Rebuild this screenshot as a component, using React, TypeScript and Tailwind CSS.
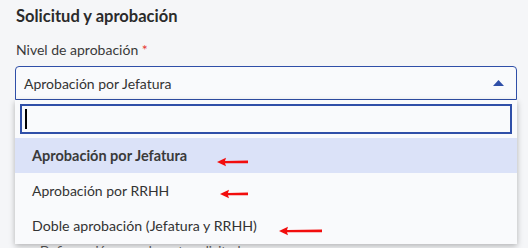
import React from "react";

function RedArrow({ width }: { width: number }) {
  return (
    <svg width={width} height={10} viewBox={`0 0 ${width} 10`} className="block">
      <path d={`M0 5 L9 0.8 L8 4 L${width} 3.6 L${width} 6.2 L8 6.2 L9 9.2 Z`} fill="#f20d0d" />
    </svg>
  );
}

export default function App() {
  return (
    <div className="relative w-[528px] h-[248px] overflow-hidden bg-[#f5f6f8] text-[#333333] font-['Lato','Open_Sans',sans-serif]">
      <div className="px-4 pt-[6px]">
        <h2 className="text-[16.5px] font-bold leading-[20px] text-[#2b2b2b]">Solicitud y aprobación</h2>
        <div className="mt-[15px] text-[14px] leading-[18px] text-[#3a3a3a]">
          Nivel de aprobación <span className="text-[#e53935]">*</span>
        </div>
        <div className="mt-[7px] w-[502px] h-[34px] ml-[-1px] flex items-center justify-between rounded-t-[4px] border border-[#2f4fa8] bg-[#f9fafc] pl-[8px] pr-[12px]">
          <span className="text-[14px] text-[#333]">Aprobación por Jefatura</span>
          <svg width="11" height="6" viewBox="0 0 11 6">
            <path d="M0 6 L5.5 0 L11 6 Z" fill="#2f4fa8" />
          </svg>
        </div>
        <div className="mt-[143px] pl-[24px] text-[13px] leading-[16px] text-[#555]">Defina quién aprueba esta solicitud</div>
      </div>

      <div className="absolute left-[15px] top-[100px] w-[502px] h-[144px] bg-[#f9fafc] shadow-[0_2px_6px_rgba(0,0,0,0.28)] flex flex-col">
        <div className="mx-[5px] mt-[4px] h-[30px] border-2 border-[#2f4fa8] bg-[#f9fafc] flex items-center pl-[3px]">
          <div className="w-[1.5px] h-[20px] bg-black" />
        </div>
        <div className="mt-[4px] h-[35px] bg-[#dbe2f8] flex items-center pl-[17px]">
          <span className="text-[14.5px] font-bold text-[#3a3a3a]">Aprobación por Jefatura</span>
        </div>
        <div className="h-[35px] flex items-center pl-[17px] text-[14px] text-[#333]">
          Aprobación por RRHH
        </div>
        <div className="h-[36px] flex items-center pl-[17px] text-[14.2px] text-[#333]">
          Doble aprobación (Jefatura y RRHH)
        </div>
      </div>

      <div className="absolute left-[217px] top-[157px]"><RedArrow width={31} /></div>
      <div className="absolute left-[220px] top-[189px]"><RedArrow width={28} /></div>
      <div className="absolute left-[279px] top-[226px]"><RedArrow width={43} /></div>
    </div>
  );
}
